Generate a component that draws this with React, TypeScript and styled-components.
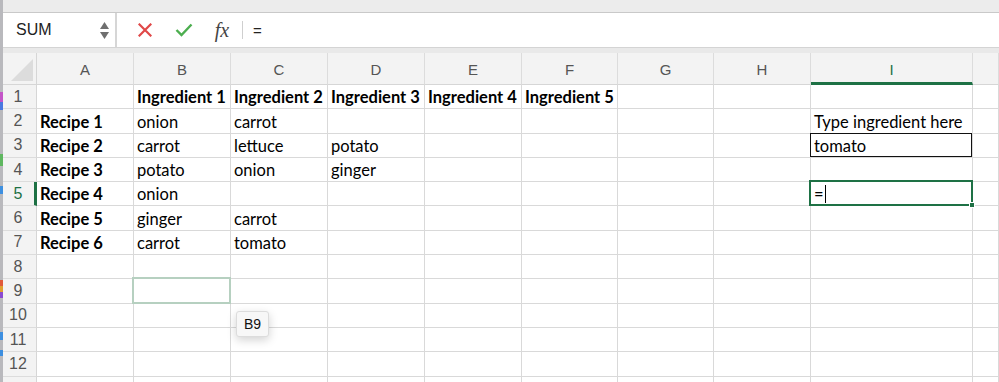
import React from 'react';
import styled, { createGlobalStyle, css } from 'styled-components';

const GlobalStyle = createGlobalStyle`
    html, body {
        margin: 0;
        padding: 0;
        background: #ffffff;
    }
    * {
        box-sizing: border-box;
    }
`;

const Page = styled.div`
    width: 999px;
    height: 382px;
    overflow: hidden;
    display: flex;
    background: #ffffff;
`;

const LeftEdge = styled.div`
    width: 3px;
    display: flex;
    flex-direction: column;
    background: #b9b9bd;
`;

const EdgeBit = styled.div<{ $h: number; $color: string }>`
    height: ${(p) => p.$h}px;
    background: ${(p) => p.$color};
    flex-shrink: 0;
`;

const Main = styled.div`
    flex: 1;
    display: flex;
    flex-direction: column;
    min-width: 0;
`;

const TopStrip = styled.div`
    height: 13px;
    background: #ececec;
    border-bottom: 1px solid #c9c9c9;
    flex-shrink: 0;
`;

const FormulaBar = styled.div`
    height: 35px;
    display: flex;
    align-items: stretch;
    background: #ffffff;
    border-bottom: 1px solid #d4d4d4;
    flex-shrink: 0;
`;

const NameBox = styled.div`
    width: 114px;
    display: flex;
    align-items: center;
    justify-content: space-between;
    padding: 0 6px 0 13px;
    border-right: 2px solid #d6d6d6;
    font-family: 'Liberation Sans', Arial, sans-serif;
    font-size: 16px;
    color: #222;
`;

const Spinner = styled.div`
    display: flex;
    flex-direction: column;
    align-items: center;
    gap: 3px;
`;

const FormulaTools = styled.div`
    display: flex;
    align-items: center;
    flex: 1;
    padding-left: 17px;
`;

const ToolIcon = styled.div`
    width: 22px;
    display: flex;
    align-items: center;
    justify-content: center;
    margin-right: 17px;
`;

const Fx = styled.span`
    font-family: 'Liberation Serif', 'Times New Roman', serif;
    font-style: italic;
    font-size: 20px;
    color: #444;
    width: 22px;
    text-align: center;
    margin-left: -1px;
`;

const Divider = styled.div`
    width: 1px;
    height: 18px;
    background: #cfcfcf;
    margin: 0 10px 0 9px;
`;

const FormulaText = styled.span`
    font-family: 'Liberation Sans', Arial, sans-serif;
    font-size: 15px;
    color: #222;
`;

const Gap = styled.div`
    height: 5px;
    background: #e9e9e9;
    flex-shrink: 0;
`;

const Sheet = styled.div`
    position: relative;
    flex: 1;
    display: grid;
    grid-template-columns: 34px 97px 97px 97px 97px 97px 96px 96px 97px 162px 1fr;
    grid-template-rows: 32px repeat(13, 24.3px);
    overflow: hidden;
`;

const Corner = styled.div`
    background: #f3f3f3;
    border-right: 1px solid #d6d6d6;
    border-bottom: 1px solid #d6d6d6;
    position: relative;
    overflow: hidden;

    &::after {
        content: '';
        position: absolute;
        right: 3px;
        bottom: 3px;
        width: 0;
        height: 0;
        border-left: 22px solid transparent;
        border-bottom: 22px solid #dcdcdc;
    }
`;

const ColHead = styled.div<{ $active?: boolean }>`
    background: #f3f3f3;
    border-right: 1px solid #dcdcdc;
    border-bottom: 1px solid #d6d6d6;
    display: flex;
    align-items: center;
    justify-content: center;
    font-family: 'Liberation Sans', Arial, sans-serif;
    font-size: 15px;
    color: #555;
    padding-top: 2px;
    ${(p) =>
        p.$active &&
        css`
            color: #1e7145;
            border-bottom: 3px solid #1e7145;
            padding-top: 4px;
        `}
`;

const RowHead = styled.div<{ $active?: boolean }>`
    background: #f3f3f3;
    border-right: 1px solid #d6d6d6;
    border-bottom: 1px solid #dcdcdc;
    display: flex;
    align-items: center;
    justify-content: center;
    font-family: 'Liberation Sans', Arial, sans-serif;
    font-size: 16px;
    color: #555;
    padding-right: 3px;
    ${(p) =>
        p.$active &&
        css`
            color: #1e7145;
            border-right: 3px solid #1e7145;
            padding-right: 1px;
        `}
`;

const Cell = styled.div<{ $bold?: boolean; $mark?: 'boxed' | 'active' | 'faded' }>`
    position: relative;
    border-right: 1px solid #d9d9d9;
    border-bottom: 1px solid #d9d9d9;
    display: flex;
    align-items: flex-end;
    padding: 0 0 1px 3px;
    font-family: Lato, 'Open Sans', sans-serif;
    font-size: 16.5px;
    font-weight: ${(p) => (p.$bold ? 700 : 400)};
    color: #000;
    white-space: nowrap;

    ${(p) =>
        p.$mark === 'boxed' &&
        css`
            &::after {
                content: '';
                position: absolute;
                inset: -1px 0 0 -1px;
                border: 1px solid #111;
            }
        `}
    ${(p) =>
        p.$mark === 'active' &&
        css`
            &::after {
                content: '';
                position: absolute;
                inset: -2px -1px -1px -2px;
                border: 2px solid #1e7145;
            }
        `}
    ${(p) =>
        p.$mark === 'faded' &&
        css`
            &::after {
                content: '';
                position: absolute;
                inset: -2px -1px -1px -2px;
                border: 2px solid #b6d0c0;
            }
        `}
`;

const FillHandle = styled.span`
    position: absolute;
    right: -3px;
    bottom: -3px;
    width: 6px;
    height: 6px;
    background: #1e7145;
    border: 1px solid #fff;
    z-index: 2;
`;

const Caret = styled.span`
    display: inline-block;
    width: 1px;
    height: 18px;
    background: #000;
    margin-left: 1px;
    margin-bottom: 1px;
`;

const Tooltip = styled.div`
    position: absolute;
    left: 233px;
    top: 258px;
    padding: 4px 7px;
    background: #f7f7f7;
    border: 1px solid #dcdcdc;
    border-radius: 3px;
    box-shadow: 0 3px 10px rgba(0, 0, 0, 0.18);
    font-family: 'Liberation Sans', Arial, sans-serif;
    font-size: 14px;
    color: #111;
    z-index: 3;
`;

const columns = ['A', 'B', 'C', 'D', 'E', 'F', 'G', 'H', 'I', ''];

type Row = { [col: string]: string };

const data: Row[] = [
    { B: 'Ingredient 1', C: 'Ingredient 2', D: 'Ingredient 3', E: 'Ingredient 4', F: 'Ingredient 5' },
    { A: 'Recipe 1', B: 'onion', C: 'carrot', I: 'Type ingredient here' },
    { A: 'Recipe 2', B: 'carrot', C: 'lettuce', D: 'potato', I: 'tomato' },
    { A: 'Recipe 3', B: 'potato', C: 'onion', D: 'ginger' },
    { A: 'Recipe 4', B: 'onion', I: '=' },
    { A: 'Recipe 5', B: 'ginger', C: 'carrot' },
    { A: 'Recipe 6', B: 'carrot', C: 'tomato' },
    {},
    {},
    {},
    {},
    {},
    {},
];

// row 13 only peeks in at the bottom edge, its number is out of view
const VISIBLE_ROWS = 12;

const edgeBits: [number, string][] = [
    [92, '#b9b9bd'],
    [10, '#c455c8'],
    [8, '#4a78e0'],
    [44, '#b9b9bd'],
    [12, '#5fb760'],
    [20, '#b9b9bd'],
    [8, '#3d8fe0'],
    [86, '#b9b9bd'],
    [6, '#e05a3a'],
    [6, '#e0a030'],
    [6, '#8a4ad0'],
    [34, '#b9b9bd'],
    [8, '#3d8fe0'],
    [10, '#b9b9bd'],
    [6, '#3d8fe0'],
];

function markFor(row: number, col: string): 'boxed' | 'active' | 'faded' | undefined {
    if (row === 3 && col === 'I') return 'boxed';
    if (row === 5 && col === 'I') return 'active';
    if (row === 9 && col === 'B') return 'faded';
    return undefined;
}

export default function App() {
    return (
        <>
            <GlobalStyle />
            <Page>
                <LeftEdge>
                    {edgeBits.map(([h, c], i) => (
                        <EdgeBit key={i} $h={h} $color={c} />
                    ))}
                </LeftEdge>
                <Main>
                    <TopStrip />
                    <FormulaBar>
                        <NameBox>
                            <span>SUM</span>
                            <Spinner>
                                <svg width="9" height="7" viewBox="0 0 9 7">
                                    <path d="M4.5 0 L9 7 L0 7 Z" fill="#6f6f6f" />
                                </svg>
                                <svg width="9" height="7" viewBox="0 0 9 7">
                                    <path d="M0 0 L9 0 L4.5 7 Z" fill="#6f6f6f" />
                                </svg>
                            </Spinner>
                        </NameBox>
                        <FormulaTools>
                            <ToolIcon>
                                <svg width="14" height="14" viewBox="0 0 14 14">
                                    <path d="M1.5 1.5 L12.5 12.5 M12.5 1.5 L1.5 12.5" stroke="#e04848" strokeWidth="2.2" strokeLinecap="square" />
                                </svg>
                            </ToolIcon>
                            <ToolIcon>
                                <svg width="18" height="14" viewBox="0 0 18 14">
                                    <path d="M1.5 7 L6.5 12 L16.5 1.5" stroke="#4cae4f" strokeWidth="2.4" fill="none" />
                                </svg>
                            </ToolIcon>
                            <Fx>fx</Fx>
                            <Divider />
                            <FormulaText>=</FormulaText>
                        </FormulaTools>
                    </FormulaBar>
                    <Gap />
                    <Sheet>
                        <Corner />
                        {columns.map((c, i) => (
                            <ColHead key={i} $active={c === 'I'}>
                                {c}
                            </ColHead>
                        ))}
                        {data.map((row, r) => {
                            const n = r + 1;
                            return (
                                <React.Fragment key={n}>
                                    <RowHead $active={n === 5}>{n <= VISIBLE_ROWS ? n : ''}</RowHead>
                                    {columns.map((c, i) => {
                                        const mark = markFor(n, c);
                                        const value = row[c] || '';
                                        return (
                                            <Cell key={i} $bold={n === 1 || c === 'A'} $mark={mark}>
                                                {mark === 'active' ? (
                                                    <>
                                                        {value}
                                                        <Caret />
                                                        <FillHandle />
                                                    </>
                                                ) : (
                                                    value
                                                )}
                                            </Cell>
                                        );
                                    })}
                                </React.Fragment>
                            );
                        })}
                        <Tooltip>B9</Tooltip>
                    </Sheet>
                </Main>
            </Page>
        </>
    );
}
